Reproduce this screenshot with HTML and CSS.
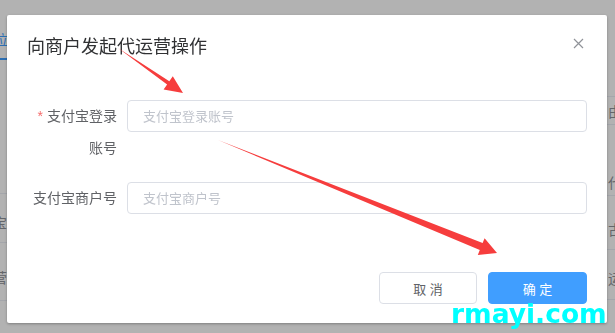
FILE: index.html
```html
<!DOCTYPE html>
<html lang="zh-CN">
<head>
    <meta charset="UTF-8">
    <meta name="viewport" content="width=device-width, initial-scale=1.0">
    <title>向商户发起代运营操作</title>
    <link rel="stylesheet" href="styles.css">
</head>
<body>
    <!-- page behind the mask -->
    <div class="page">
        <div class="edge edge-left">
            <div class="tab">业务定位</div>
            <div class="cell cell-blank"></div>
            <div class="cell cell-a">支付宝</div>
            <div class="cell cell-b">运营</div>
        </div>
        <div class="edge edge-right">
            <div class="cell cell-r1"></div>
            <div class="cell cell-r2">由商户</div>
            <div class="cell cell-r3">代运营</div>
            <div class="cell cell-r4">古城店</div>
            <div class="cell cell-r5">运营中</div>
        </div>
    </div>

    <!-- Modal -->
    <div class="mask">
        <div class="dialog">
            <div class="dialog-header">
                <span class="dialog-title">向商户发起代运营操作</span>
                <button class="dialog-close" type="button">
                    <svg width="11" height="11" viewBox="0 0 11 11">
                        <path d="M1 1 L10 10 M10 1 L1 10" stroke="#909399" stroke-width="1.2" fill="none"/>
                    </svg>
                </button>
            </div>
            <div class="dialog-body">
                <div class="form-item">
                    <label class="form-label"><span class="required">*</span>支付宝登录账号</label>
                    <input class="form-input" type="text" placeholder="支付宝登录账号">
                </div>
                <div class="form-item">
                    <label class="form-label">支付宝商户号</label>
                    <input class="form-input" type="text" placeholder="支付宝商户号">
                </div>
            </div>
            <div class="dialog-footer">
                <button class="btn" type="button">取 消</button>
                <button class="btn btn-primary" type="button">确 定</button>
            </div>
        </div>
    </div>

    <!-- annotation arrows drawn over the screenshot -->
    <svg class="marks" width="615" height="333" viewBox="0 0 615 333">
        <polygon points="118,48 169.3,81.2 172.8,76.2 183,93 163.6,89.4 167.1,84.4" fill="#f63d3d"/>
        <polygon points="218,140 482.6,243.1 484.6,238.3 497,253 477.8,254.9 479.8,250.1" fill="#f63d3d"/>
    </svg>
    <div class="watermark">rmayi.com</div>
</body>
</html>
```

FILE: styles.css
```css
body {
    margin: 0;
    width: 615px;
    height: 333px;
    overflow: hidden;
    font-family: "Liberation Sans", "Noto Sans CJK SC", sans-serif;
    background-color: #ffffff;
}
.page {
    display: flex;
    justify-content: space-between;
    height: 333px;
}
.edge {
    width: 8px;
    overflow: hidden;
    display: flex;
    flex-direction: column;
    font-size: 14px;
    color: #909399;
}
.cell {
    display: flex;
    align-items: center;
    white-space: nowrap;
    border-bottom: 1px solid #ebeef5;
    box-sizing: border-box;
}
.edge-left .cell,
.edge-left .tab {
    justify-content: flex-end;
}
.edge-left .cell {
    padding-right: 1px;
}
.tab {
    display: flex;
    white-space: nowrap;
    height: 60px;
    box-sizing: border-box;
    padding-top: 30px;
    line-height: 20px;
    color: #409eff;
    border-bottom: 2px solid #409eff;
}
.cell-blank {
    height: 134px;
}
.cell-a {
    height: 49px;
    padding-top: 8px;
}
.cell-b {
    height: 58px;
    padding-top: 10px;
}
.cell-r1 {
    height: 97px;
}
.cell-r2 {
    height: 28px;
    padding-left: 1px;
}
.cell-r3 {
    height: 71px;
    padding-top: 44px;
    padding-left: 1px;
}
.cell-r4 {
    height: 54px;
    padding-top: 12px;
    padding-left: 1px;
}
.cell-r5 {
    height: 50px;
    padding-top: 6px;
    padding-left: 1px;
}
.mask {
    position: fixed;
    left: 0;
    top: 0;
    width: 100%;
    height: 100%;
    background-color: rgba(0, 0, 0, 0.3);
}
.dialog {
    width: 600px;
    margin: 15px 0 0 7px;
    background-color: #fff;
    border-radius: 2px;
    box-shadow: 0 1px 3px rgba(0, 0, 0, 0.3);
}
.dialog-header {
    display: flex;
    justify-content: space-between;
    align-items: flex-start;
    padding: 20px 20px 10px 20px;
}
.dialog-title {
    font-size: 18px;
    line-height: 24px;
    color: #303133;
}
.dialog-close {
    border: none;
    background: none;
    padding: 0;
    margin: 3px 3px 0 0;
    width: 11px;
    height: 11px;
    display: flex;
    cursor: pointer;
}
.dialog-body {
    padding: 31px 20px 0 20px;
}
.form-item {
    display: flex;
    align-items: flex-start;
    margin-bottom: 18px;
}
.form-label {
    width: 100px;
    flex-shrink: 0;
    box-sizing: border-box;
    padding-right: 10px;
    font-size: 14px;
    line-height: 32px;
    color: #606266;
    text-align: right;
}
.required {
    color: #f56c6c;
    margin-right: 4px;
}
.form-input {
    flex: 1;
    height: 32px;
    box-sizing: border-box;
    padding: 0 15px;
    border: 1px solid #dcdfe6;
    border-radius: 4px;
    font-family: inherit;
    font-size: 13px;
    color: #606266;
    outline: none;
}
.form-input::placeholder {
    color: #c0c4cc;
}
.dialog-footer {
    display: flex;
    justify-content: flex-end;
    gap: 11px;
    padding: 40px 20px 19px 20px;
}
.btn {
    width: 98px;
    height: 32px;
    border: 1px solid #dcdfe6;
    border-radius: 4px;
    background-color: #fff;
    color: #606266;
    font-family: inherit;
    font-size: 13px;
    cursor: pointer;
}
.btn-primary {
    width: 99px;
    background-color: #409eff;
    border-color: #409eff;
    color: #fff;
}
.marks {
    position: absolute;
    left: 0;
    top: 0;
    pointer-events: none;
}
.watermark {
    position: absolute;
    left: 451px;
    top: 301px;
    font-family: "DejaVu Sans", sans-serif;
    font-weight: bold;
    font-size: 26.5px;
    line-height: 26px;
    color: #00ffff;
}
```
